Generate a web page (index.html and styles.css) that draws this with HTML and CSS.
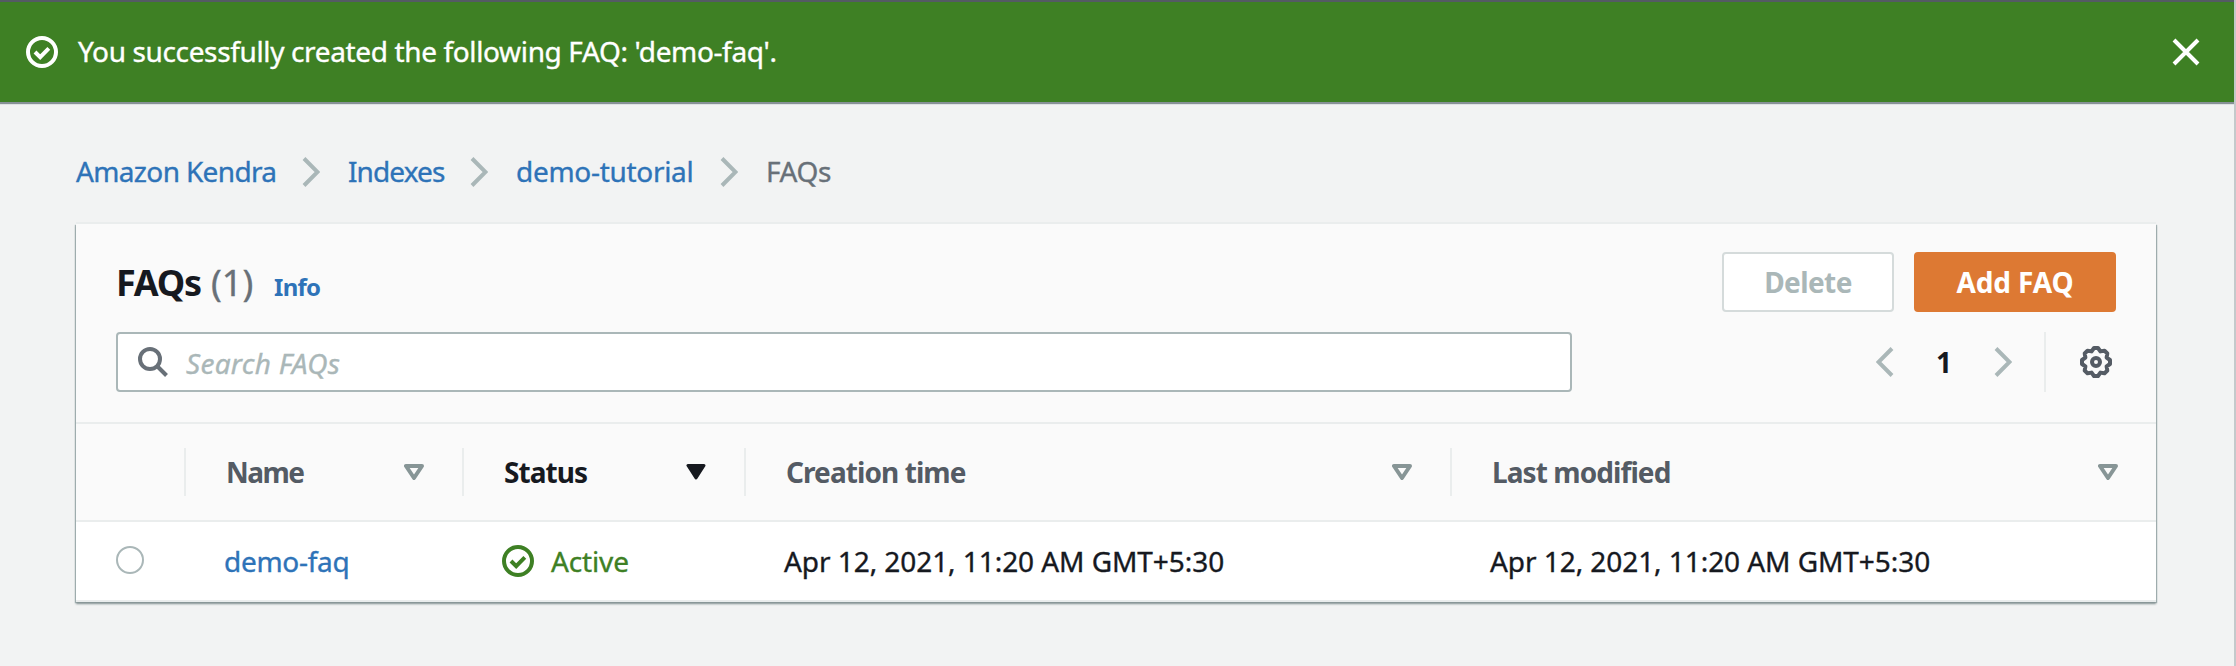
FILE: index.html
```html
<!DOCTYPE html>
<html lang="en">
<head>
<meta charset="utf-8">
<title>FAQs</title>
<link rel="stylesheet" href="styles.css">
</head>
<body>
<div class="flash">
  <svg class="icon flash-icon" viewBox="0 0 16 16"><circle cx="8" cy="8" r="7"/><path d="M4.500 8l2.600 2.600 4.300-4.400"/></svg>
  <span class="flash-text">You successfully created the following FAQ: 'demo-faq'.</span>
  <svg class="icon flash-close" viewBox="0 0 28 28"><path d="M2 2l24 24M26 2L2 26"/></svg>
</div>
<nav class="crumbs">
  <a class="crumb c1">Amazon Kendra</a>
  <svg class="icon chevron" viewBox="0 0 18 30"><path d="M2 1.500L15.500 15 2 28.500"/></svg>
  <a class="crumb c2">Indexes</a>
  <svg class="icon chevron" viewBox="0 0 18 30"><path d="M2 1.500L15.500 15 2 28.500"/></svg>
  <a class="crumb c3">demo-tutorial</a>
  <svg class="icon chevron" viewBox="0 0 18 30"><path d="M2 1.500L15.500 15 2 28.500"/></svg>
  <span class="crumb current">FAQs</span>
</nav>
<main class="card">
  <header class="card-head">
    <div class="title-row">
      <h1 class="title">FAQs</h1>
      <span class="count">(1)</span>
      <a class="info">Info</a>
      <div class="actions">
        <button class="btn delete"><span>Delete</span></button>
        <button class="btn primary"><span>Add FAQ</span></button>
      </div>
    </div>
    <div class="tools">
      <div class="search">
        <svg class="icon search-icon" viewBox="0 0 30 30"><circle cx="12" cy="12" r="10"/><path d="M19 19l9.500 9.500"/></svg>
        <span class="placeholder">Search FAQs</span>
      </div>
      <div class="pager">
        <svg class="icon chevron" viewBox="0 0 18 30"><path d="M16 1.500L2.500 15 16 28.500"/></svg>
        <span class="page">1</span>
        <svg class="icon chevron" viewBox="0 0 18 30"><path d="M2 1.500L15.500 15 2 28.500"/></svg>
      </div>
      <div class="settings">
        <svg class="icon gear" viewBox="0 0 32 32"><path d="M18 2L20.400 5.400 24.500 4.700 27.300 7.500 26.600 11.600 30 14V18L26.600 20.400 27.300 24.500 24.500 27.300 20.400 26.600 18 30H14L11.600 26.600 7.500 27.300 4.700 24.500 5.400 20.400 2 18V14L5.400 11.600 4.700 7.500 7.500 4.700 11.600 5.400 14 2z"/><circle cx="16" cy="16" r="4"/></svg>
      </div>
    </div>
  </header>
  <div class="row head">
    <div class="cell pick"></div>
    <div class="cell"><span class="h-name">Name</span><svg class="sort" viewBox="0 0 20 16"><path d="M2 2h16L10 14z"/></svg></div>
    <div class="cell sorted"><span class="h-status">Status</span><svg class="sort" viewBox="0 0 20 16"><path d="M2 1.500h16L10 14z"/></svg></div>
    <div class="cell"><span class="h-created">Creation time</span><svg class="sort" viewBox="0 0 20 16"><path d="M2 2h16L10 14z"/></svg></div>
    <div class="cell"><span class="h-modified">Last modified</span><svg class="sort" viewBox="0 0 20 16"><path d="M2 2h16L10 14z"/></svg></div>
  </div>
  <div class="row body">
    <div class="cell pick"><span class="radio"></span></div>
    <div class="cell"><a class="link">demo-faq</a></div>
    <div class="cell"><svg class="icon ok" viewBox="0 0 16 16"><circle cx="8" cy="8" r="7"/><path d="M4.500 8l2.600 2.600 4.300-4.400"/></svg><span class="active">Active</span></div>
    <div class="cell"><span class="date">Apr 12, 2021, 11:20 AM GMT+5:30</span></div>
    <div class="cell"><span class="date">Apr 12, 2021, 11:20 AM GMT+5:30</span></div>
  </div>
</main>
</body>
</html>
```

FILE: styles.css
```css
* { box-sizing: border-box; }
body {
  margin: 0;
  height: 666px;
  overflow: hidden;
  background: #f2f3f3;
  border-right: 2px solid #c4c9cb;
  color: #16191f;
  font: 28px/40px "Noto Sans", "Open Sans", sans-serif;
  white-space: nowrap;
}
.icon { display: block; flex: none; fill: none; stroke: currentColor; stroke-width: 2; }
.flash {
  display: flex;
  align-items: center;
  height: 102px;
  margin-right: -2px;
  padding: 0 36px 0 26px;
  border-top: 2px solid #545b64;
  background: #3e8024;
  color: #fff;
  box-shadow: 0 1px 1px 1px #879196;
}
.flash-icon { width: 32px; height: 32px; margin-right: 20px; }
.flash-text { padding-bottom: 2px; letter-spacing: -0.36px; }
.flash-close { width: 28px; height: 28px; margin-left: auto; stroke-width: 4; }
.flash-text, .crumb, .placeholder, .link, .active, .date, .count { -webkit-text-stroke: 0.35px currentColor; }
.crumbs { display: flex; align-items: center; height: 40px; margin: 50px 0 0 76px; color: #aab7b8; }
.crumb { padding-bottom: 2px; color: #2e73b8; }
.current { color: #687078; letter-spacing: -0.4px; }
.chevron { width: 18px; height: 30px; stroke-width: 4; }
.crumbs .chevron { margin: 0 28px 0 26px; }
.c1 { width: 200px; letter-spacing: -0.65px; }
.c2 { width: 96px; letter-spacing: -0.9px; }
.c3 { width: 178px; letter-spacing: -0.3px; }
.card {
  width: 2080px;
  height: 378px;
  margin: 32px 0 0 76px;
  background: #fff;
  box-shadow: 0 2px 2px 0 #879596, 1px 1px 1px 0 #aab7b8, -1px 1px 1px 0 #aab7b8, 0 -2px 0 0 #eaeded;
}
.card-head { height: 200px; padding: 28px 40px 0; background: #fafafa; border-bottom: 2px solid #eaeded; }
.title-row { display: flex; height: 60px; align-items: baseline; }
.title { margin: 0; width: 95px; font-size: 36px; line-height: 62px; letter-spacing: -1.2px; }
.count { width: 63px; font-size: 36px; color: #687078; }
.info { font-size: 24px; font-weight: 700; color: #2e73b8; letter-spacing: -0.7px; }
.actions { display: flex; align-self: flex-start; gap: 20px; margin-left: auto; }
.btn {
  height: 60px;
  padding: 0;
  border: 2px solid #d5dbdb;
  border-radius: 4px;
  background: #fff;
  color: #aab7b8;
  font: 700 28px/56px "Noto Sans", sans-serif;
}
.delete { width: 172px; letter-spacing: -0.6px; }
.primary { width: 202px; border-color: #dd7933; background: #dd7933; color: #fff; letter-spacing: -0.1px; }
.tools { display: flex; height: 60px; margin-top: 20px; }
.search {
  display: flex;
  align-items: center;
  width: 1456px;
  padding-left: 20px;
  border: 2px solid #aab7b8;
  border-radius: 4px;
  background: #fff;
}
.search-icon { width: 30px; height: 30px; margin-right: 18px; color: #687078; stroke-width: 4; }
.placeholder { padding-top: 2px; color: #aab7b8; font-style: italic; letter-spacing: 0.27px; }
.pager { display: flex; align-items: center; margin-left: 304px; color: #aab7b8; }
.page { width: 100px; text-align: center; color: #16191f; font-weight: 700; }
.settings { display: flex; align-items: center; width: 72px; margin-left: 32px; padding-left: 34px; border-left: 2px solid #eaeded; color: #545b64; }
.gear { width: 32px; height: 32px; stroke-width: 4; stroke-linejoin: round; }
.row { display: grid; grid-template-columns: 110px 278px 282px 706px 704px; align-items: center; }
.cell { display: flex; align-items: center; height: 48px; padding: 0 38px 0 40px; }
.head { height: 98px; background: #fafafa; border-bottom: 2px solid #eaeded; color: #545b64; font-weight: 700; letter-spacing: -0.92px; }
.head .cell { border-right: 2px solid #eaeded; }
.head .cell:last-child { border: 0; }
.head .sorted { color: #16191f; }
.h-name { letter-spacing: -1.5px; }
.sort { width: 20px; height: 16px; margin-left: auto; fill: none; stroke: #879596; stroke-width: 4; stroke-linejoin: round; }
.sorted .sort { fill: #16191f; stroke: #16191f; stroke-width: 3; }
.body { height: 80px; border-bottom: 2px solid #eaeded; }
.body .cell { padding: 0 0 0 38px; }
.body .pick { padding: 0 0 2px 40px; }
.radio { width: 28px; height: 28px; border: 2px solid #aab7b8; border-radius: 50%; background: #fff; }
.link { color: #2e73b8; letter-spacing: -0.3px; }
.ok { width: 32px; height: 32px; margin-right: 17px; color: #3e8024; }
.active { color: #3e8024; letter-spacing: -0.15px; }
.date { letter-spacing: -0.06px; }
```
